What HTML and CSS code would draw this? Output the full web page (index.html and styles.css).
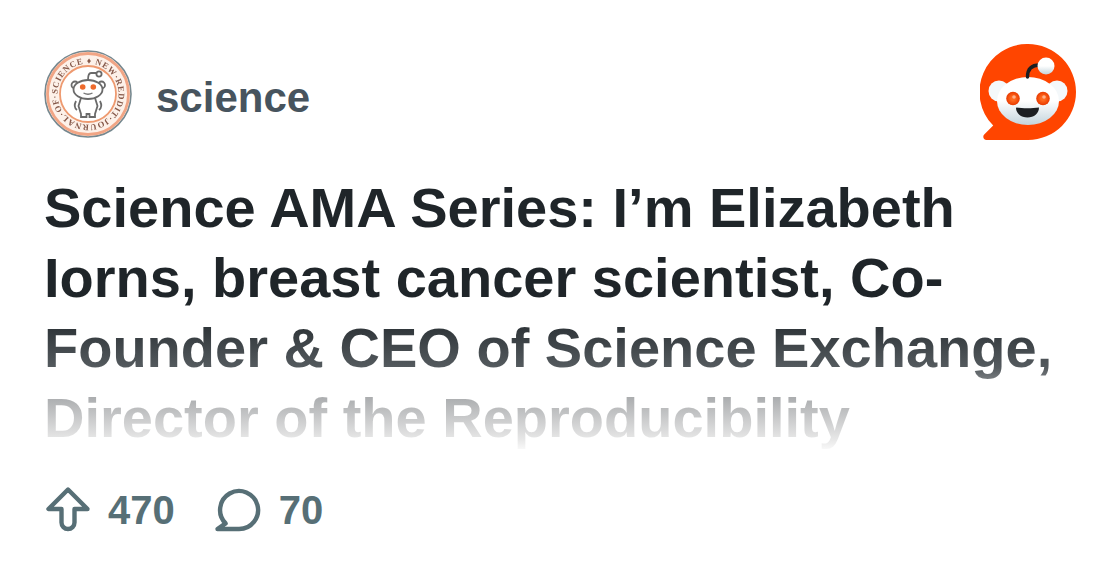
FILE: index.html
```html
<!DOCTYPE html>
<html lang="en">
<head>
<meta charset="utf-8">
<title>Science AMA Series</title>
<link rel="stylesheet" href="styles.css">
</head>
<body>
<main class="card">
  <header class="head">
    <div class="sub">
      <svg class="avatar" viewBox="0 0 88 88" aria-hidden="true">
        <defs><path id="ring" d="M13.500 44a30.500 30.500 0 1 1 61 0a30.500 30.500 0 1 1-61 0"/></defs>
        <circle cx="44" cy="44" r="43" fill="#fdf1e9" stroke="#76888f" stroke-width="1.600"/>
        <circle cx="44" cy="44" r="40.500" fill="none" stroke="#f1a585" stroke-width="2.800"/>
        <circle cx="44" cy="44" r="28" fill="#fff" stroke="#ee9a70" stroke-width="1.800"/>
        <text class="ring-text"><textPath href="#ring" textLength="190">SCIENCE ♦ NEW·REDDIT·JOURNAL·OF·</textPath></text>
        <g fill="#fff" stroke="#6a6a6a" stroke-width="1.800">
          <path d="M44 30q0-7 3-7h6" fill="none"/>
          <circle cx="55" cy="24" r="2.600"/>
          <circle cx="31" cy="35" r="3.500"/>
          <circle cx="57.500" cy="35" r="3.500"/>
          <path d="M32 51q-3 6 1 9M56 51q3 6-1 9" fill="none"/>
          <path d="M37 48h14l2.500 8-2.500 8v3h-5.500v-3h-3v3H37v-3l-2.500-8z"/>
          <ellipse cx="44" cy="39.500" rx="14.500" ry="9.500"/>
        </g>
        <circle cx="38.700" cy="37" r="2.800" fill="#ee6a2c"/>
        <circle cx="49.300" cy="37" r="2.800" fill="#ee6a2c"/>
        <path d="M39.500 43q4.500 2.500 9 0" fill="none" stroke="#777" stroke-width="1.300"/>
      </svg>
      <span class="sub-name">science</span>
    </div>
    <svg class="logo" viewBox="0 0 96 96" aria-hidden="true">
      <defs>
        <linearGradient id="face" x1="0" y1="0" x2="0" y2="1">
          <stop offset="0.5" stop-color="#fff"/>
          <stop offset="1" stop-color="#c3d4dc"/>
        </linearGradient>
        <radialGradient id="eye">
          <stop offset="0.3" stop-color="#ff6a20"/>
          <stop offset="1" stop-color="#e83a00"/>
        </radialGradient>
      </defs>
      <path fill="#ff4500" d="M48 0a48 48 0 0 1 0 96H6.500c-2.800 0-4.300-3.400-2.300-5.400l9-9A48 48 0 0 1 48 0z"/>
      <circle cx="19" cy="47" r="10.500" fill="#f4f8fa"/>
      <circle cx="77" cy="47" r="10.500" fill="#f4f8fa"/>
      <ellipse cx="48" cy="57" rx="31" ry="24" fill="url(#face)"/>
      <path d="M47.500 33c0-8 4-12 12-12" fill="none" stroke="#1c1f22" stroke-width="3.400" stroke-linecap="round"/>
      <circle cx="66" cy="22" r="8.500" fill="url(#face)"/>
      <circle cx="33" cy="54.500" r="6.800" fill="url(#eye)"/>
      <circle cx="63" cy="54.500" r="6.800" fill="url(#eye)"/>
      <circle cx="34" cy="53" r="1.800" fill="#ffb08a"/>
      <circle cx="64" cy="53" r="1.800" fill="#ffb08a"/>
      <path d="M36 63.500c7 1 16 1 23 0 0 6-5 10-11.500 10S36 69.500 36 63.500z" fill="#1c1f22"/>
    </svg>
  </header>
  <h1 class="title">Science AMA Series: I’m Elizabeth Iorns, breast cancer scientist, Co-Founder &amp; CEO of Science Exchange, Director of the Reproducibility</h1>
  <footer class="stats">
    <div class="stat">
      <svg class="icon" viewBox="0 0 46 46" aria-hidden="true">
        <path d="M24 2.500L4.500 22H17.500V35.500a6.500 6.500 0 0 0 13 0V22H43.500z" fill="none" stroke="#576f76" stroke-width="4.400" stroke-linejoin="round"/>
      </svg>
      <span>470</span>
    </div>
    <div class="stat">
      <svg class="icon" viewBox="0 0 46 46" aria-hidden="true">
        <path d="M10.600 36.400A19 19 0 1 1 24 42H2.500z" fill="none" stroke="#576f76" stroke-width="4.400" stroke-linejoin="round"/>
      </svg>
      <span>70</span>
    </div>
  </footer>
</main>
</body>
</html>
```
FILE: styles.css
```css
html, body {
  margin: 0;
  padding: 0;
  background: #fff;
}
.card {
  width: 1120px;
  height: 584px;
  box-sizing: border-box;
  padding: 44px;
  overflow: hidden;
  font-family: "Liberation Sans", Arial, sans-serif;
}
.head {
  display: flex;
  justify-content: space-between;
  align-items: center;
  height: 96px;
}
.sub {
  display: flex;
  align-items: center;
  gap: 24px;
  padding-top: 4px;
}
.avatar {
  width: 88px;
  height: 88px;
  display: block;
  filter: blur(0.35px);
}
.ring-text {
  font-size: 8.6px;
  font-weight: 700;
  fill: #86594a;
  font-family: "Liberation Serif", serif;
}
.sub-name {
  font-size: 42px;
  font-weight: 700;
  color: #47545e;
  padding-top: 8px;
}
.logo {
  width: 96px;
  height: 96px;
  display: block;
}
.title {
  margin: 33px 0 0;
  width: 1032px;
  height: 280px;
  font-size: 56px;
  line-height: 70px;
  font-weight: 700;
  color: transparent;
  background: linear-gradient(180deg, #1f2529 0, #1f2529 140px, #32383c 157px, #555b5f 195px, #a8aaac 222px, #e8e8e8 267px, #fff 280px);
  -webkit-background-clip: text;
  background-clip: text;
}
.stats {
  display: flex;
  align-items: center;
  gap: 40px;
  margin-top: 34px;
}
.stat {
  display: flex;
  align-items: center;
  gap: 18px;
  font-size: 40px;
  font-weight: 700;
  color: #576f76;
}
.icon {
  width: 46px;
  height: 46px;
  display: block;
}
```
